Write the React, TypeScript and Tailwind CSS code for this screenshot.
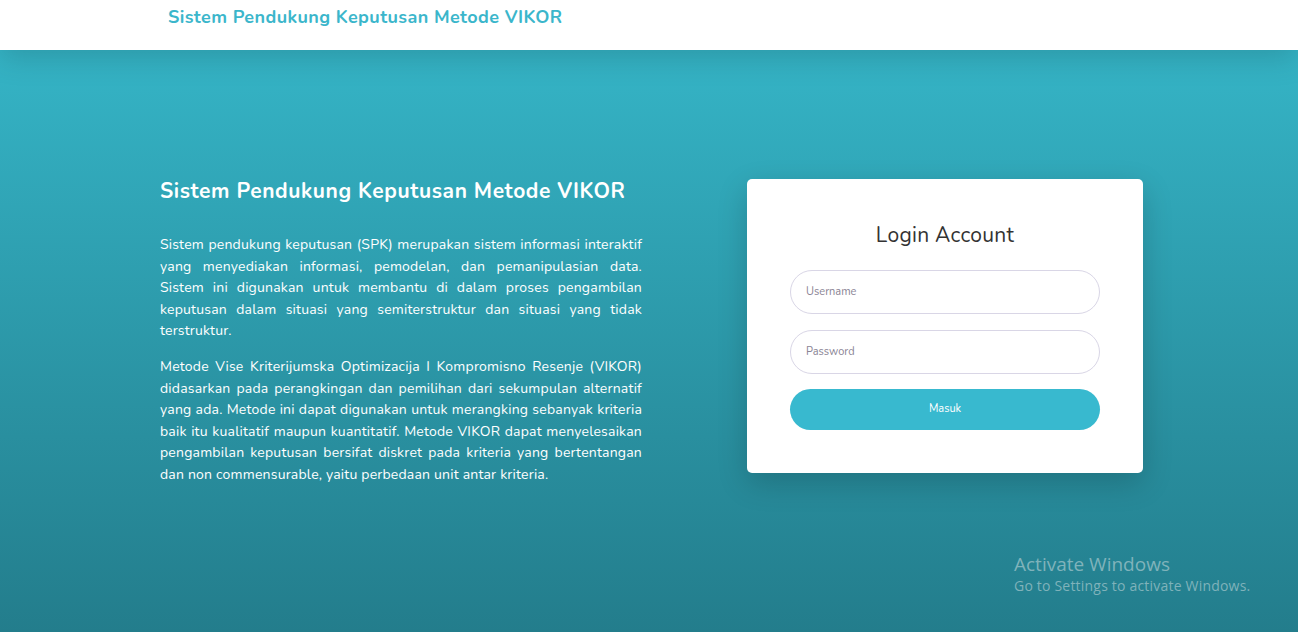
import React from 'react';

const font = { fontFamily: 'Nunito, Lato, "Open Sans", sans-serif' };

function Header() {
  return (
    <header className="relative z-10 h-[50px] bg-white shadow-[0_8px_30px_rgba(0,0,0,0.16)]">
      <h1 className="pl-[168px] pt-[4px] text-[18px] font-bold tracking-[0.4px] text-[#3bb6cb]">
        Sistem Pendukung Keputusan Metode VIKOR
      </h1>
    </header>
  );
}

function LoginCard() {
  return (
    <div className="w-[396px] h-[294px] rounded-[5px] bg-white shadow-[0_10px_30px_rgba(0,0,0,0.18)] px-[43px] pt-[41px]">
      <h2 className="text-center text-[21px] tracking-[0.3px] text-[#333] mb-[18px]">Login Account</h2>
      <div className="flex flex-col gap-[16px]">
        <input
          placeholder="Username"
          className="h-[44px] w-full rounded-full border border-[#d9d6e6] px-[15px] text-[11px] placeholder:text-[#8a8494] outline-none"
        />
        <input
          type="password"
          placeholder="Password"
          className="h-[44px] w-full rounded-full border border-[#d9d6e6] px-[15px] text-[11px] placeholder:text-[#8a8494] outline-none"
        />
        <button className="mt-[-1px] h-[41px] w-full rounded-full bg-[#38b9cf] text-[11px] text-white">
          Masuk
        </button>
      </div>
    </div>
  );
}

export default function App() {
  return (
    <div style={font} className="min-h-[632px] flex flex-col">
      <Header />
      <main className="relative flex-1 bg-gradient-to-b from-[#35b4c6] to-[#237d8c]">
        <div className="flex pl-[160px] pt-[129px]">
          <div className="w-[482px] text-white">
            <h2 className="text-[21px] font-bold tracking-[0.6px] leading-[24px] mb-[31px]">
              Sistem Pendukung Keputusan Metode VIKOR
            </h2>
            <p className="text-justify text-[14px] tracking-[0.2px] leading-[21.6px] mb-[14px]">
              Sistem pendukung keputusan (SPK) merupakan sistem informasi interaktif yang menyediakan
              informasi, pemodelan, dan pemanipulasian data. Sistem ini digunakan untuk membantu di
              dalam proses pengambilan keputusan dalam situasi yang semiterstruktur dan situasi yang
              tidak terstruktur.
            </p>
            <p className="text-justify text-[14px] tracking-[0.2px] leading-[21.6px]">
              Metode Vise Kriterijumska Optimizacija I Kompromisno Resenje (VIKOR) didasarkan pada
              perangkingan dan pemilihan dari sekumpulan alternatif yang ada. Metode ini dapat
              digunakan untuk merangking sebanyak kriteria baik itu kualitatif maupun kuantitatif.
              Metode VIKOR dapat menyelesaikan pengambilan keputusan bersifat diskret pada kriteria
              yang bertentangan dan non commensurable, yaitu perbedaan unit antar kriteria.
            </p>
          </div>
          <div className="ml-[105px]">
            <LoginCard />
          </div>
        </div>
        <div
          className="absolute left-[1014px] top-[502px] text-[#9fc3c9]/75"
          style={{ fontFamily: '"Segoe UI", "Open Sans", sans-serif' }}
        >
          <div className="text-[19px] leading-[24px]">Activate Windows</div>
          <div className="text-[14px] tracking-[0.2px] leading-[20px]">Go to Settings to activate Windows.</div>
        </div>
      </main>
    </div>
  );
}
